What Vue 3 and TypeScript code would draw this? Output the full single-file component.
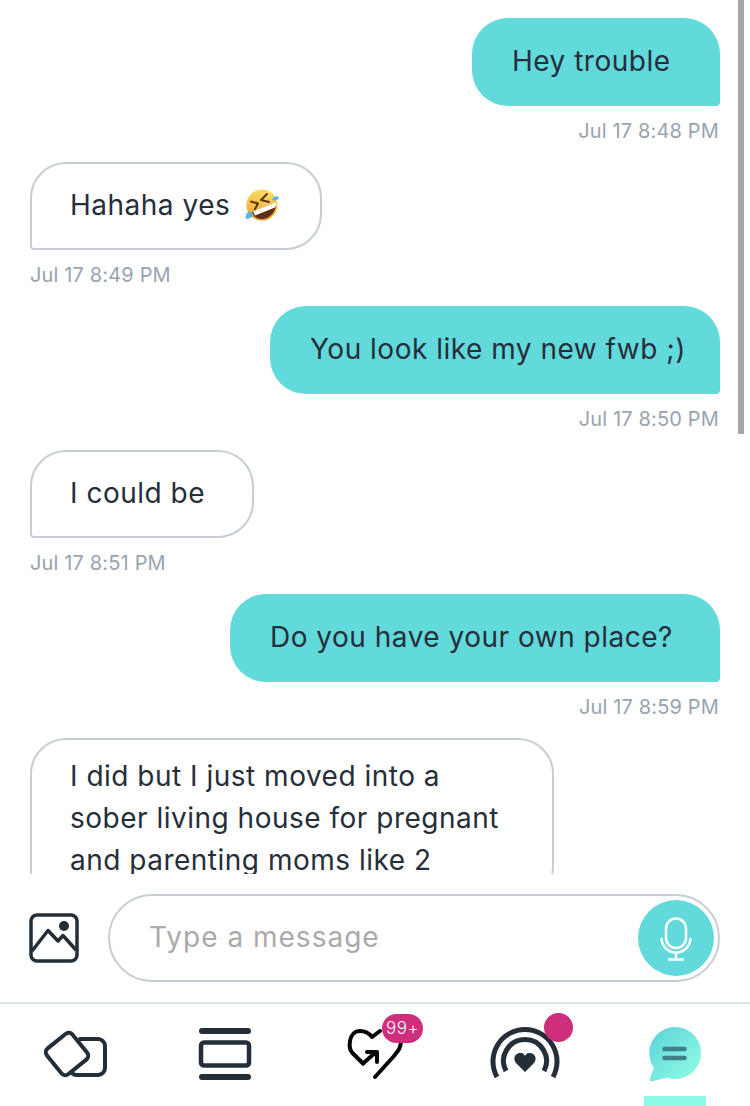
<template>
  <div class="chat-page">
    <div class="messages">
      <div v-for="msg in messages" :key="msg.id" class="msg" :class="msg.mine ? 'mine' : 'theirs'">
        <div class="bubble" :class="{ long: msg.long }" :style="{ width: msg.width + 'px' }">
          <span>
            {{ msg.text }}
            <svg v-if="msg.emoji" class="rofl" viewBox="0 0 34 34" width="34" height="34">
              <defs>
                <linearGradient id="roflFace" x1="0.6" y1="0" x2="0.4" y2="1">
                  <stop offset="0" stop-color="#fcdc62" />
                  <stop offset="0.6" stop-color="#f7bd42" />
                  <stop offset="1" stop-color="#ec9429" />
                </linearGradient>
              </defs>
              <circle cx="17" cy="17" r="15.5" fill="url(#roflFace)" />
              <path d="M7 24 L31 14 C32 24 24 31 17 31 C12 31 8 28 7 24Z" fill="#5e2f10" />
              <path d="M8 23.500 L31 14 C31.500 16 31 18 30 19.500 L10 27.500Z" fill="#fff" />
              <path d="M6 13.500 L13 15.500 L10 21" fill="none" stroke="#5b3414" stroke-width="2" stroke-linecap="round" stroke-linejoin="round" />
              <path d="M22 6 L16 12 L24 14" fill="none" stroke="#5b3414" stroke-width="2" stroke-linecap="round" stroke-linejoin="round" />
              <path d="M34 9 C33 13 30 13 27 12 C28 9 30 7 34 9Z" fill="#5bb4ec" />
              <path d="M1 31 C0 28 1 25 4 23 C6 24 8 26 8 28 C6 30 3 31 1 31Z" fill="#5bb4ec" />
            </svg>
          </span>
        </div>
        <div class="time">{{ msg.time }}</div>
      </div>
      <div class="scrollbar"></div>
    </div>

    <div class="composer">
      <svg class="photo-icon" viewBox="0 0 50 50" width="50" height="50" fill="none" stroke="#232e38" stroke-width="3.500">
        <rect x="2" y="2" width="46" height="46" rx="6" />
        <path d="M3 38 L19 17.500 L29 28 L34 22.500 L47 37" stroke-linejoin="round" />
        <circle cx="35" cy="13" r="5" fill="#232e38" stroke="none" />
      </svg>
      <div class="input-box">
        <span class="placeholder">Type a message</span>
        <button class="mic">
          <svg viewBox="0 0 76 76" width="76" height="76" fill="none" stroke="#fff" stroke-width="2.500">
            <rect x="28" y="18.500" width="20" height="29.500" rx="10" />
            <path d="M23.500 38 a14.500 14.500 0 0 0 29 0" />
            <path d="M38 52.500 V59 M30 59.500 H46" />
          </svg>
        </button>
      </div>
    </div>

    <nav class="tabs">
      <div class="tab">
        <svg viewBox="0 0 150 102" width="150" height="102" fill="none" stroke="#232e38" stroke-width="4">
          <rect x="50.500" y="33.500" width="33" height="33" rx="5" transform="rotate(-39 67 50)" />
          <path d="M80 35 H98 a7 7 0 0 1 7 7 V64 a7 7 0 0 1 -7 7 H76 a7 7 0 0 1 -4 -2" stroke-linecap="round" />
        </svg>
      </div>
      <div class="tab">
        <svg viewBox="0 0 150 102" width="150" height="102" fill="none" stroke="#232e38">
          <path d="M52 27 H98 M52 73 H98" stroke-width="6" stroke-linecap="round" />
          <rect x="51" y="38.500" width="48" height="23" rx="3" stroke-width="4.500" />
        </svg>
      </div>
      <div class="tab">
        <svg viewBox="0 0 150 102" width="150" height="102" fill="none" stroke="#050505" stroke-width="4" stroke-linecap="round" stroke-linejoin="round">
          <path d="M63 59.500 L52 48.500 C49 45 49.500 40 50 37 C51 31 55 27 60 27 C65 27 69 29 72 33 L80 27" />
          <path d="M63 59.500 L76 48 M67 48 H77 V58" />
          <path d="M75 73 L94 52 C98 47 101 44 101 36" />
        </svg>
        <span class="count">99+</span>
      </div>
      <div class="tab">
        <svg viewBox="0 0 150 102" width="150" height="102" fill="none" stroke="#232e38" stroke-width="5">
          <path d="M47 73 A32 32 0 1 1 103 73" />
          <path d="M56 67 A21.500 21.500 0 1 1 94 67" />
          <path d="M75 68 L66 59 C62 54 66 48 71 49 C73 49 74 50 75 52 C76 50 77 49 79 49 C84 48 88 54 84 59Z" fill="#232e38" stroke="none" />
        </svg>
        <span class="dot"></span>
      </div>
      <div class="tab active">
        <svg viewBox="0 0 150 102" width="150" height="102">
          <defs>
            <linearGradient id="chatFill" x1="0.1" y1="0.1" x2="0.9" y2="0.9">
              <stop offset="0" stop-color="#60d6d9" />
              <stop offset="1" stop-color="#8efbe6" />
            </linearGradient>
          </defs>
          <path d="M75 23 a26 26 0 1 1 -8 50.700 L53 77 C50 78 49 76 50 74 L54 64 A26 26 0 0 1 75 23Z" fill="url(#chatFill)" />
          <path d="M64.500 45 H84.500 M64.500 54 H84.500" stroke="#3f7f8a" stroke-width="4.500" stroke-linecap="round" />
        </svg>
        <span class="underline"></span>
      </div>
    </nav>
  </div>
</template>

<script setup lang="ts">
interface Message {
  id: number
  text: string
  time: string
  mine: boolean
  width: number
  emoji?: boolean
  long?: boolean
}

const messages: Message[] = [
  { id: 1, text: 'Hey trouble', time: 'Jul 17 8:48 PM', mine: true, width: 248 },
  { id: 2, text: 'Hahaha yes', time: 'Jul 17 8:49 PM', mine: false, width: 292, emoji: true },
  { id: 3, text: 'You look like my new fwb ;)', time: 'Jul 17 8:50 PM', mine: true, width: 450 },
  { id: 4, text: 'I could be', time: 'Jul 17 8:51 PM', mine: false, width: 224 },
  { id: 5, text: 'Do you have your own place?', time: 'Jul 17 8:59 PM', mine: true, width: 490 },
  {
    id: 6,
    text: 'I did but I just moved into a sober living house for pregnant and parenting moms like 2',
    time: 'Jul 17 9:02 PM',
    mine: false,
    width: 524,
    long: true
  }
]
</script>

<style scoped>
.chat-page {
  width: 750px;
  height: 1106px;
  display: flex;
  flex-direction: column;
  background: #fff;
  font-family: Inter, "Liberation Sans", sans-serif;
  color: #252e39;
  overflow: hidden;
}
.messages {
  position: relative;
  height: 874px;
  flex: none;
  box-sizing: border-box;
  padding: 18px 30px 0;
  overflow: hidden;
}
.msg {
  display: flex;
  flex-direction: column;
  height: 144px;
}
.msg.mine { align-items: flex-end; }
.msg.theirs { align-items: flex-start; }
.bubble {
  box-sizing: border-box;
  min-height: 88px;
  padding: 17px 0 19px 40px;
  display: flex;
  align-items: center;
  font-size: 28px;
  line-height: 42px;
  letter-spacing: 0.5px;
  flex: none;
  white-space: nowrap;
}
.bubble.long {
  white-space: normal;
  padding: 15px 40px 19px 38px;
}
.mine .bubble {
  background: #62d9da;
  border-radius: 36px 36px 4px 36px;
}
.theirs .bubble {
  background: #fff;
  border: 2px solid #c5ced6;
  border-radius: 36px 36px 36px 4px;
  padding-left: 38px;
}
.rofl {
  vertical-align: -7px;
  margin-left: 6px;
}
.time {
  margin-top: 13px;
  font-size: 20px;
  line-height: 24px;
  letter-spacing: 0.15px;
  color: #98a3b0;
}
.mine .time {
  padding-right: 1px;
}
.scrollbar {
  position: absolute;
  top: 0;
  right: 6px;
  width: 6px;
  height: 434px;
  background: #a6a6a6;
}
.composer {
  height: 128px;
  flex: none;
  box-sizing: border-box;
  display: flex;
  align-items: center;
  padding: 0 30px 0 29px;
  gap: 29px;
}
.photo-icon { flex: none; }
.input-box {
  flex: 1;
  height: 88px;
  box-sizing: border-box;
  border: 2px solid #c5ced6;
  border-radius: 44px;
  display: flex;
  align-items: center;
  justify-content: space-between;
  padding: 0 4px 0 39px;
}
.placeholder {
  font-size: 28px;
  letter-spacing: 1px;
  color: #aaaaaa;
  padding-bottom: 2px;
}
.mic {
  width: 76px;
  height: 76px;
  padding: 0;
  border: none;
  border-radius: 50%;
  background: #62d9da;
}
.mic svg { display: block; }
.tabs {
  height: 104px;
  flex: none;
  box-sizing: border-box;
  border-top: 2px solid #dde3ea;
  display: grid;
  grid-template-columns: repeat(5, 150px);
}
.tab {
  position: relative;
  height: 102px;
}
.tab svg { display: block; }
.count {
  position: absolute;
  left: 82px;
  top: 10px;
  width: 41px;
  height: 29px;
  border-radius: 15px;
  background: #cf2e7c;
  color: #fff;
  font-size: 17px;
  font-weight: 300;
  letter-spacing: 0.5px;
  line-height: 29px;
  text-align: center;
}
.dot {
  position: absolute;
  left: 94px;
  top: 9px;
  width: 29px;
  height: 29px;
  border-radius: 50%;
  background: #cf2e7c;
}
.underline {
  position: absolute;
  left: 44px;
  bottom: 0;
  width: 62px;
  height: 10px;
  background: #8dfbe6;
}
</style>

<style>
html, body {
  margin: 0;
  background: #fff;
  overflow: hidden;
}
</style>
